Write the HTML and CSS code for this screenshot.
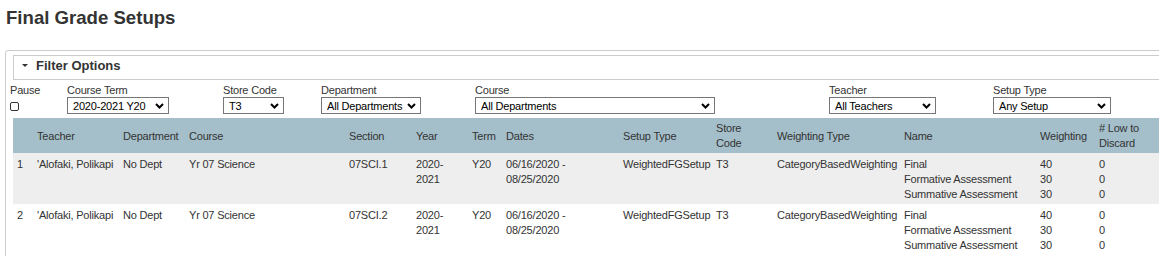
FILE: index.html
```html
<!DOCTYPE html>
<html lang="en">
  <head>
    <meta charset="UTF-8" />
    <meta name="viewport" content="width=device-width, initial-scale=1.0" />
    <title>Final Grade Setups</title>
    <link rel="stylesheet" href="styles.css">
  </head>
  <body>
    <h1 class="page-title">Final Grade Setups</h1>

    <div class="panel">
      <div class="filter-head"><span class="caret"></span>Filter Options</div>

      <div class="filters">
        <div class="field">
          <label for="pause">Pause</label>
          <input type="checkbox" id="pause" class="check" />
        </div>
        <div class="field">
          <label for="term">Course Term</label>
          <div class="select-wrap w-term">
            <select id="term"><option>2020-2021 Y20</option></select>
            <svg class="chev" width="9" height="6" viewBox="0 0 9 6"><path d="M1 1 L4.5 4.5 L8 1" /></svg>
          </div>
        </div>
        <div class="field">
          <label for="store">Store Code</label>
          <div class="select-wrap w-store">
            <select id="store"><option>T3</option></select>
            <svg class="chev" width="9" height="6" viewBox="0 0 9 6"><path d="M1 1 L4.5 4.5 L8 1" /></svg>
          </div>
        </div>
        <div class="field">
          <label for="dept">Department</label>
          <div class="select-wrap w-dept">
            <select id="dept"><option>All Departments</option></select>
            <svg class="chev" width="9" height="6" viewBox="0 0 9 6"><path d="M1 1 L4.5 4.5 L8 1" /></svg>
          </div>
        </div>
        <div class="field">
          <label for="course">Course</label>
          <div class="select-wrap w-course">
            <select id="course"><option>All Departments</option></select>
            <svg class="chev" width="9" height="6" viewBox="0 0 9 6"><path d="M1 1 L4.5 4.5 L8 1" /></svg>
          </div>
        </div>
        <div class="field">
          <label for="teacher">Teacher</label>
          <div class="select-wrap w-teacher">
            <select id="teacher"><option>All Teachers</option></select>
            <svg class="chev" width="9" height="6" viewBox="0 0 9 6"><path d="M1 1 L4.5 4.5 L8 1" /></svg>
          </div>
        </div>
        <div class="field">
          <label for="setup">Setup Type</label>
          <div class="select-wrap w-setup">
            <select id="setup"><option>Any Setup</option></select>
            <svg class="chev" width="9" height="6" viewBox="0 0 9 6"><path d="M1 1 L4.5 4.5 L8 1" /></svg>
          </div>
        </div>
      </div>

      <table class="setups">
        <colgroup>
          <col class="c-num" />
          <col class="c-teacher" />
          <col class="c-dept" />
          <col class="c-course" />
          <col class="c-section" />
          <col class="c-year" />
          <col class="c-term" />
          <col class="c-dates" />
          <col class="c-type" />
          <col class="c-store" />
          <col class="c-wtype" />
          <col class="c-name" />
          <col class="c-weight" />
          <col class="c-low" />
        </colgroup>
        <thead>
          <tr>
            <th></th>
            <th>Teacher</th>
            <th>Department</th>
            <th>Course</th>
            <th>Section</th>
            <th>Year</th>
            <th>Term</th>
            <th>Dates</th>
            <th>Setup Type</th>
            <th>Store<br />Code</th>
            <th>Weighting Type</th>
            <th>Name</th>
            <th>Weighting</th>
            <th># Low to<br />Discard</th>
          </tr>
        </thead>
        <tbody>
          <tr class="odd">
            <td>1</td>
            <td>'Alofaki, Polikapi</td>
            <td>No Dept</td>
            <td>Yr 07 Science</td>
            <td>07SCI.1</td>
            <td>2020-<br />2021</td>
            <td>Y20</td>
            <td>06/16/2020 -<br />08/25/2020</td>
            <td>WeightedFGSetup</td>
            <td>T3</td>
            <td>CategoryBasedWeighting</td>
            <td><div>Final</div><div>Formative Assessment</div><div>Summative Assessment</div></td>
            <td><div>40</div><div>30</div><div>30</div></td>
            <td><div>0</div><div>0</div><div>0</div></td>
          </tr>
          <tr>
            <td>2</td>
            <td>'Alofaki, Polikapi</td>
            <td>No Dept</td>
            <td>Yr 07 Science</td>
            <td>07SCI.2</td>
            <td>2020-<br />2021</td>
            <td>Y20</td>
            <td>06/16/2020 -<br />08/25/2020</td>
            <td>WeightedFGSetup</td>
            <td>T3</td>
            <td>CategoryBasedWeighting</td>
            <td><div>Final</div><div>Formative Assessment</div><div>Summative Assessment</div></td>
            <td><div>40</div><div>30</div><div>30</div></td>
            <td><div>0</div><div>0</div><div>0</div></td>
          </tr>
        </tbody>
      </table>
    </div>
  </body>
</html>
```

FILE: styles.css
```css
body {
  font-family: "Liberation Sans", Arial, sans-serif;
  font-size: 11px;
  letter-spacing: -0.2px;
  color: #333;
  margin: 0;
  padding: 0;
  background-color: #fff;
  overflow: hidden;
}

.page-title {
  margin: 0;
  padding: 7px 6px 0;
  font-size: 18.6px;
  line-height: 21px;
  font-weight: bold;
  letter-spacing: 0;
  color: #333;
}

.panel {
  width: 1190px;
  margin: 22px 0 0 5px;
  border: 1px solid #ccc;
  border-radius: 3px;
  padding-bottom: 20px;
}

.filter-head {
  display: flex;
  align-items: center;
  height: 15px;
  margin: 4px 0 0 7px;
  padding: 2px 0 6px 8px;
  border: 1px solid #ccc;
  border-right: none;
  font-size: 13px;
  font-weight: bold;
  letter-spacing: 0;
  line-height: 15px;
}

.caret {
  width: 0;
  height: 0;
  margin-right: 8px;
  border-left: 3px solid transparent;
  border-right: 3px solid transparent;
  border-top: 3px solid #333;
}

.filters {
  display: grid;
  grid-template-columns: 57px 156px 98px 154px 354px 164px auto;
  padding: 4px 0 4px 4px;
}

.field label {
  display: block;
  line-height: 13px;
}

.check {
  appearance: none;
  display: block;
  width: 9px;
  height: 9px;
  margin: 5px 0 0 0;
  border: 1px solid #333;
  border-radius: 2px;
  background: #fff;
}

.select-wrap {
  position: relative;
  height: 17px;
}

.select-wrap select {
  appearance: none;
  width: 100%;
  height: 17px;
  margin: 0;
  padding: 0 0 0 5px;
  border: 1px solid #767676;
  border-radius: 0;
  background: #fff;
  font-family: inherit;
  font-size: 11px;
  letter-spacing: -0.2px;
  color: #000;
}

.chev {
  position: absolute;
  right: 5px;
  top: 6px;
  fill: none;
  stroke: #000;
  stroke-width: 2;
}

.w-term { width: 102px; }
.w-store { width: 61px; }
.w-dept { width: 100px; }
.w-course { width: 240px; }
.w-teacher { width: 107px; }
.w-setup { width: 118px; }

.setups {
  margin-left: 7px;
  border-collapse: collapse;
  table-layout: fixed;
  width: 1162px;
}

.c-num { width: 20px; }
.c-teacher { width: 86px; }
.c-dept { width: 66px; }
.c-course { width: 160px; }
.c-section { width: 67px; }
.c-year { width: 56px; }
.c-term { width: 34px; }
.c-dates { width: 117px; }
.c-type { width: 93px; }
.c-store { width: 61px; }
.c-wtype { width: 127px; }
.c-name { width: 136px; }
.c-weight { width: 59px; }
.c-low { width: 80px; }

.setups th {
  background-color: #a4bfca;
  font-weight: normal;
  text-align: left;
  vertical-align: middle;
  line-height: 15px;
  padding: 3px 4px 2px;
  white-space: nowrap;
}

.setups td {
  vertical-align: top;
  line-height: 15px;
  padding: 4px 4px 2px;
  white-space: nowrap;
}

.setups tr.odd td {
  background-color: #eee;
}
```
